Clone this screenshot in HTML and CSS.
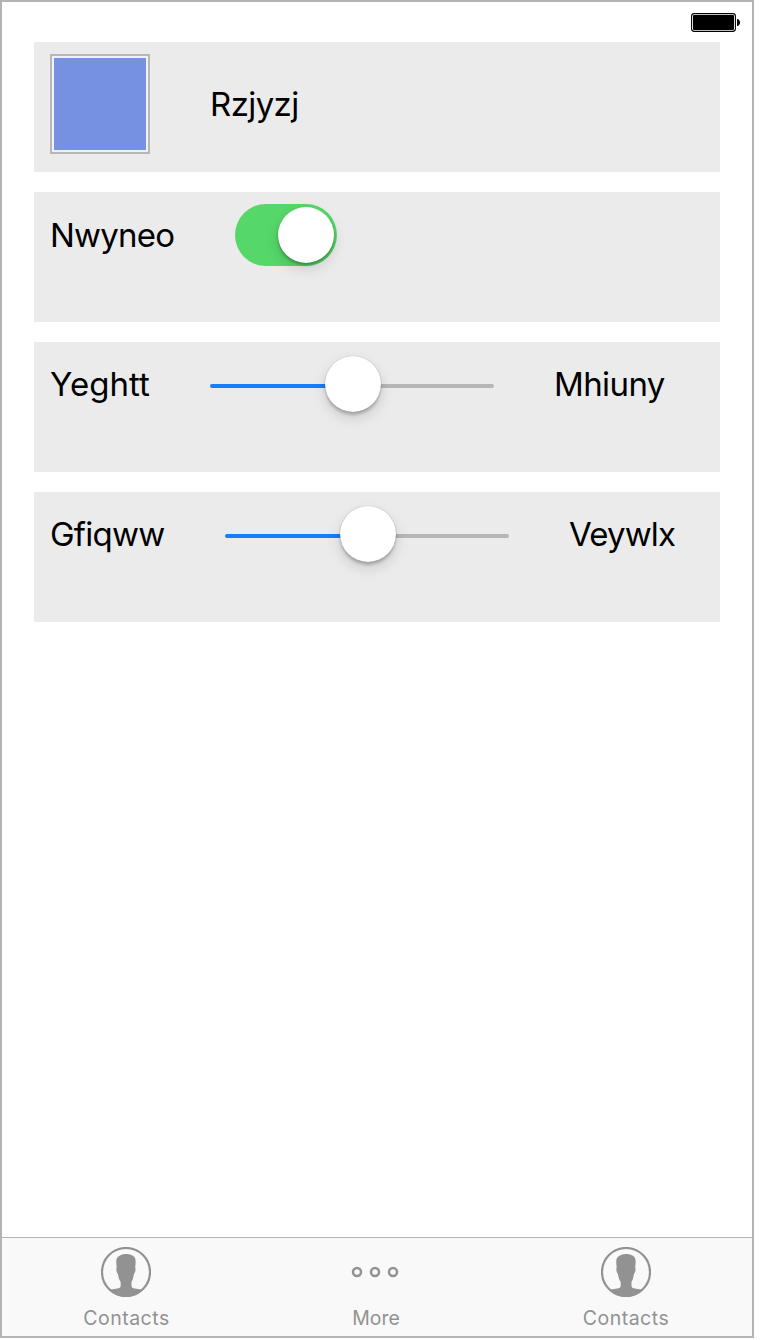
FILE: index.html
```html
<!DOCTYPE html>
<html lang="en">
<head>
<meta charset="utf-8">
<title>Settings</title>
<link rel="stylesheet" href="styles.css">
</head>
<body>
<div class="screen">
  <header class="status">
    <svg class="battery" width="50" height="20" viewBox="0 0 50 20">
      <rect x="0.6" y="0.6" width="43.800" height="17.800" rx="2.6" fill="none" stroke="#000" stroke-width="1.1"/>
      <rect x="2" y="2" width="41" height="15" rx="1"/>
      <path d="M46 6h.6C48 6.4 49 7.600 49 9.500S48 12.600 46.600 13H46z"/>
    </svg>
  </header>
  <main class="panels">
    <section class="panel">
      <div class="swatch"></div>
      <span class="label name">Rzjyzj</span>
    </section>
    <section class="panel">
      <span class="label nwyneo">Nwyneo</span>
      <div class="toggle"><div class="thumb"></div></div>
    </section>
    <section class="panel">
      <span class="label yeghtt">Yeghtt</span>
      <div class="slider"><div class="track fill"></div><div class="thumb"></div><div class="track"></div></div>
      <span class="label mhiuny">Mhiuny</span>
    </section>
    <section class="panel">
      <span class="label gfiqww">Gfiqww</span>
      <div class="slider"><div class="track fill"></div><div class="thumb"></div><div class="track"></div></div>
      <span class="label veywlx">Veywlx</span>
    </section>
  </main>
  <nav class="tabs">
    <div class="tab">
      <svg width="50" height="50" viewBox="0 0 50 50">
        <circle cx="25" cy="25" r="24" fill="none" stroke="#929292" stroke-width="2.200"/>
        <path fill="#929292" d="M9 43C12 41.500 18 42 19.300 40.200C20 39 19.700 36.500 19.500 34.500C18 33 17.400 29.500 16.900 27C15.500 25.500 14.900 22 15.700 20.500C15.300 17 14.800 13 16 11C18 8.200 22 7 25 7.100C28.500 7.200 32.600 8.300 34 11C35.100 13.500 34.500 17 34.200 20.500C35 22 34.300 25.500 32.900 27C32.400 29.500 32 33 30.600 34.500C30.500 36.500 30.200 39 30.900 40.200C32 42 38 41.500 41 43C36.500 47.500 31 50 25 50S13.500 47.500 9 43z"/>
      </svg>
      <span class="caption contacts">Contacts</span>
    </div>
    <div class="tab">
      <svg width="50" height="50" viewBox="0 0 50 50" fill="none" stroke="#929292" stroke-width="2.500">
        <circle cx="6" cy="25" r="4"/><circle cx="24" cy="25" r="4"/><circle cx="42" cy="25" r="4"/>
      </svg>
      <span class="caption more">More</span>
    </div>
    <div class="tab">
      <svg width="50" height="50" viewBox="0 0 50 50">
        <circle cx="25" cy="25" r="24" fill="none" stroke="#929292" stroke-width="2.200"/>
        <path fill="#929292" d="M9 43C12 41.500 18 42 19.300 40.200C20 39 19.700 36.500 19.500 34.500C18 33 17.400 29.500 16.900 27C15.500 25.500 14.900 22 15.700 20.500C15.300 17 14.800 13 16 11C18 8.200 22 7 25 7.100C28.500 7.200 32.600 8.300 34 11C35.100 13.500 34.500 17 34.200 20.500C35 22 34.300 25.500 32.900 27C32.400 29.500 32 33 30.600 34.500C30.500 36.500 30.200 39 30.900 40.200C32 42 38 41.500 41 43C36.500 47.500 31 50 25 50S13.500 47.500 9 43z"/>
      </svg>
      <span class="caption contacts">Contacts</span>
    </div>
  </nav>
</div>
</body>
</html>
```

FILE: styles.css
```css
* { box-sizing: border-box; }
body { margin: 0; background: #fff; font-family: Inter, Roboto, sans-serif; color: #000; }
.screen {
  width: 754px;
  height: 1338px;
  border: 2px solid #b3b3b3;
  display: flex;
  flex-direction: column;
}
.status {
  height: 40px;
  padding: 11px 11px 0 0;
  display: flex;
  justify-content: flex-end;
}
.battery { display: block; }
.panels {
  flex: 1;
  padding: 0 32px;
  display: flex;
  flex-direction: column;
  gap: 20px;
}
.panel {
  height: 130px;
  background: #ebebeb;
  padding: 12px 16px;
  display: flex;
  align-items: flex-start;
  gap: 60px;
}
.label { font-size: 33px; line-height: 60px; height: 60px; white-space: nowrap; }
.name { line-height: 100px; height: 100px; letter-spacing: -0.600px; }
.nwyneo { width: 125px; line-height: 62px; letter-spacing: -0.800px; }
.yeghtt { width: 100px; letter-spacing: 0.050px; }
.mhiuny { letter-spacing: -0.600px; }
.gfiqww { width: 115px; letter-spacing: -0.750px; }
.veywlx { letter-spacing: -0.850px; }
.swatch {
  width: 100px;
  height: 100px;
  border: 2px solid #b7b7b7;
  padding: 2px;
  background: #7690e2 content-box;
  box-shadow: inset 0 0 0 2px #f0f2fa;
}
.toggle {
  width: 102px;
  height: 62px;
  border-radius: 31px;
  background: #55d769;
  padding: 3px;
  display: flex;
  justify-content: flex-end;
}
.thumb {
  flex: none;
  width: 56px;
  height: 56px;
  border-radius: 50%;
  background: #fff;
  box-shadow: 0 6px 14px rgba(0, 0, 0, .13), 0 2px 3px rgba(0, 0, 0, .3);
}
.slider { width: 284px; height: 60px; display: flex; align-items: center; }
.slider .thumb {
  margin: 0 -4px;
  z-index: 1;
  box-shadow: 0 6px 14px rgba(0, 0, 0, .14), 0 3px 3px rgba(0, 0, 0, .2), 0 0 1px rgba(0, 0, 0, .3);
}
.track { flex: 1; height: 4px; margin-top: 4px; border-radius: 2px; background: #b6b6b6; }
.fill { flex: none; width: 119px; background: #157efb; }
.tabs {
  height: 99px;
  border-top: 1px solid #b2b2b2;
  background: #f9f9f9;
  display: grid;
  padding-top: 9px;
  grid-template-columns: 248px 250px 252px;
}
.tab { display: flex; flex-direction: column; align-items: center; }
.tab:nth-child(2) svg { margin-left: 1px; }
.caption { margin-top: 9px; font-size: 19.500px; line-height: 24px; color: #929292; }
.contacts { letter-spacing: 0.500px; }
.more { padding-left: 2px; }
.tab:first-child .caption { padding-left: 1px; }
```
